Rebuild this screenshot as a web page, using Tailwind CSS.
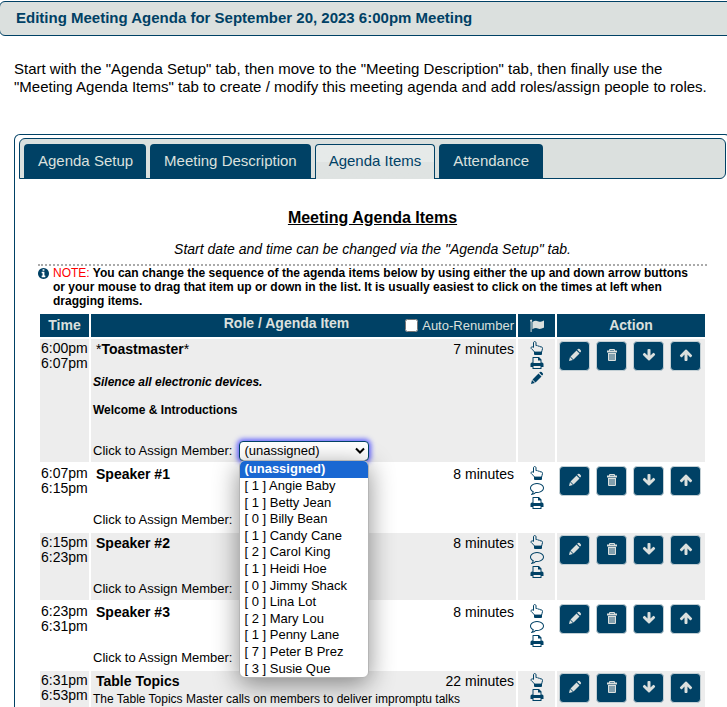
<!DOCTYPE html>
<html lang="en">
<head>
<meta charset="utf-8">
<title>Editing Meeting Agenda</title>
<script src="https://cdn.jsdelivr.net/npm/@tailwindcss/browser@4"></script>
</head>
<body class="bg-white text-black font-['Liberation_Sans',Arial,sans-serif]">
<svg class="hidden" aria-hidden="true">
  <symbol id="pencil" viewBox="0 0 14 14"><path fill="currentColor" d="M1 13l1-4 2.900 2.900zM2.500 8.400L8.500 2.400l3 3-6 6zM9.200 1.800l.7-.7a1.200 1.200 0 0 1 1.700 0l1.100 1.100a1.200 1.200 0 0 1 0 1.700l-.7.7z"/></symbol>
  <symbol id="trash" viewBox="0 0 14 14"><path fill="currentColor" fill-rule="evenodd" d="M5 1h4a1 1 0 0 1 1 1v.5h2v2H2v-2h2V2a1 1 0 0 1 1-1zM5 2v.5h4V2zM3 5h8v7a1 1 0 0 1-1 1H4a1 1 0 0 1-1-1zM4.600 6v6h.8V6zM6.600 6v6h.8V6zM8.600 6v6h.8V6z"/></symbol>
  <symbol id="print" viewBox="0 0 14 14"><path fill="currentColor" fill-rule="evenodd" d="M3 1h6l2.500 2.500V6.500H12A1.500 1.500 0 0 1 13.500 8v3H11.500v2H2.500v-2H.5V8A1.500 1.500 0 0 1 2 6.500h.5V1.500A.5.5 0 0 1 3 1zM3.500 2v5h7V4.500H8V2zM3.500 10v2h7v-2z"/></symbol>
  <symbol id="comment" viewBox="0 0 1792 1792"><path fill="currentColor" d="M896 384q-204 0-381.500 69.500t-282 187.500-104.500 255q0 112 71.500 213.500t201.500 175.500l87 50-27 96q-24 91-70 172 152-63 275-171l43-38 57 6q69 8 130 8 204 0 381.500-69.500t282-187.500 104.500-255-104.500-255-282-187.500-381.500-69.500zm896 512q0 174-120 321.500t-326 233-450 85.500q-70 0-145-8-198 175-460 242-49 14-114 22h-5q-15 0-27-10.500t-16-27.500v-1q-3-4-.5-12t2-10 4.500-9.500l6-9 7-8.500 8-9q7-8 31-34.500t34.500-38 31-39.500 32.500-51 27-59 26-76q-157-89-247.500-220t-90.500-281q0-174 120-321.500t326-233 450-85.500 450 85.500 326 233 120 321.500z"/></symbol>
  <symbol id="up" viewBox="0 0 1792 1792"><path fill="currentColor" d="M1675 971q0 51-37 90l-75 75q-38 38-91 38-54 0-90-38l-294-293v704q0 52-37.500 84.500t-90.500 32.500h-128q-53 0-90.500-32.500t-37.500-84.500v-704l-294 293q-36 38-90 38t-90-38l-75-75q-38-38-38-90 0-53 38-91l651-651q35-37 90-37 54 0 91 37l651 651q37 39 37 91z"/></symbol>
  <symbol id="down" viewBox="0 0 1792 1792"><path fill="currentColor" transform="rotate(180 896 896)" d="M1675 971q0 51-37 90l-75 75q-38 38-91 38-54 0-90-38l-294-293v704q0 52-37.500 84.500t-90.500 32.500h-128q-53 0-90.500-32.500t-37.500-84.500v-704l-294 293q-36 38-90 38t-90-38l-75-75q-38-38-38-90 0-53 38-91l651-651q35-37 90-37 54 0 91 37l651 651q37 39 37 91z"/></symbol>
  <symbol id="info" viewBox="128 128 1536 1536"><path fill="currentColor" d="M1152 1376v-160q0-14-9-23t-23-9h-96v-512q0-14-9-23t-23-9h-320q-14 0-23 9t-9 23v160q0 14 9 23t23 9h96v320h-96q-14 0-23 9t-9 23v160q0 14 9 23t23 9h448q14 0 23-9t9-23zm-128-896v-160q0-14-9-23t-23-9h-192q-14 0-23 9t-9 23v160q0 14 9 23t23 9h192q14 0 23-9t9-23zm640 416q0 209-103 385.500t-279.500 279.500-385.500 103-385.500-103-279.500-279.500-103-385.500 103-385.500 279.500-279.500 385.500-103 385.500 103 279.500 279.500 103 385.500z"/></symbol>
  <symbol id="flag" viewBox="0 0 14 14"><path fill="currentColor" d="M0 1.700a1.100 1.100 0 1 1 1.600 1V13H.6V2.700A1.100 1.100 0 0 1 0 1.700zM2.400 3C3.800 2.100 5 1.700 6 1.800c1.400.1 2.200 1 3.600 1 1.300 0 2.600-.6 3.600-1.100.5-.2.800 0 .8.400v6.100c0 .3-.1.500-.4.600-1.300.7-2.500 1.200-3.900 1.200-1.400 0-2.300-1-3.700-1-1.300 0-2.400.5-3.600 1.200z"/></symbol>
  <symbol id="hand" viewBox="0 0 14 14"><path fill="none" stroke="currentColor" stroke-width="1" stroke-linejoin="round" d="M4.500 11.300C4.200 10 3.200 9.300 1.900 8.300 1.100 7.600.8 6.900 1.300 6.200c.5-.6 1.400-.4 2.200.2V2c0-.9.500-1.500 1.200-1.500S6 1.100 6 2v2.700c.8-.4 1.600-.1 2 .5.8-.4 1.700 0 2 .6 1.600-.3 2.500.4 2.500 1.700 0 1.600-.9 2.400-1 3.800z"/><path fill="currentColor" d="M4 10.800h8V13a1 1 0 0 1-1 1H5a1 1 0 0 1-1-1z"/></symbol>
</svg>

<div class="min-h-screen flex flex-col overflow-x-hidden">
  <header class="mt-px -ml-px -mr-2 h-[35px] flex items-center border border-[#004165] rounded-md bg-[#dbe0de] pl-4">
    <h1 class="text-[15px] font-bold text-[#004165]">Editing Meeting Agenda for September 20, 2023 6:00pm Meeting</h1>
  </header>
  <p class="mt-6 pl-3.5 text-[15px] leading-[18px] whitespace-nowrap">Start with the "Agenda Setup" tab, then move to the "Meeting Description" tab, then finally use the<br>"Meeting Agenda Items" tab to create / modify this meeting agenda and add roles/assign people to roles.</p>

  <main class="mt-[38px] ml-3.5 -mr-1 flex-1 border border-b-0 border-[#004165] rounded-t-md pt-[3px]">
    <nav class="mx-1 h-[41px] flex items-end gap-1 border border-[#004165] rounded-t-md rounded-br-md bg-[#dbe0de] pl-1 text-[15px] text-[#dbe0de]">
      <a href="#setup" class="h-[34px] flex items-center rounded-t bg-[#004165] pl-3.5 pr-[13px]">Agenda Setup</a>
      <a href="#description" class="h-[34px] flex items-center rounded-t bg-[#004165] px-3.5">Meeting Description</a>
      <a href="#items" class="h-[35px] -mb-px flex items-center rounded-t border border-b-0 border-[#004165] bg-linear-to-b from-[#e6eae9] from-50% to-[#dfe3e2] to-50% px-[13px] pb-0.5 text-[#004165]">Agenda Items</a>
      <a href="#attendance" class="h-[34px] flex items-center rounded-t bg-[#004165] px-3.5">Attendance</a>
    </nav>

    <section id="items" class="px-[23px] pt-[29px]">
      <h2 class="text-center text-base leading-5 font-bold underline">Meeting Agenda Items</h2>
      <p class="mt-[11px] text-center text-sm leading-5 italic">Start date and time can be changed via the "Agenda Setup" tab.</p>
      <div class="mt-[5px] border-t-2 border-dotted border-[#aaaaaa]"></div>
      <p class="flex gap-1 text-xs leading-[14px] font-bold"><svg class="mt-0.5 size-[11px] shrink-0 text-[#004165]"><use href="#info"/></svg><span><span class="text-[#ff0000] font-normal">NOTE:</span> You can change the sequence of the agenda items below by using either the up and down arrow buttons<br>or your mouse to drag that item up or down in the list. It is usually easiest to click on the times at left when<br>dragging items.</span></p>

      <table class="mt-1 -mb-0.5 w-full table-fixed border-separate border-spacing-[2px]">
        <colgroup><col class="w-[49px]"><col><col class="w-[37px]"><col class="w-[148px]"></colgroup>
        <thead>
          <tr class="h-[23px] text-sm leading-[19px] text-[#dbe0de] *:bg-[#004165] *:p-0">
            <th>Time</th>
            <th>
              <div class="grid grid-cols-[1fr_auto_1fr] items-center pr-0.5">
                <span></span>
                <span class="-ml-8 pb-1">Role / Agenda Item</span>
                <label class="flex items-center justify-end gap-1 whitespace-nowrap text-[13px] font-normal"><input type="checkbox" class="size-[13px]">Auto-Renumber</label>
              </div>
            </th>
            <th><svg class="mx-auto size-3.5" role="img" aria-label="Flags"><use href="#flag"/></svg></th>
            <th>Action</th>
          </tr>
        </thead>
        <tbody id="rows" class="align-top text-sm"></tbody>
      </table>
    </section>
  </main>
</div>

<script>
const members = [[1,'Angie Baby'],[1,'Betty Jean'],[0,'Billy Bean'],[1,'Candy Cane'],[2,'Carol King'],[1,'Heidi Hoe'],[0,'Jimmy Shack'],[0,'Lina Lot'],[2,'Mary Lou'],[1,'Penny Lane'],[7,'Peter B Prez'],[3,'Susie Que']];
const items = [
  {s:'6:00pm', e:'6:07pm', name:'<span class="font-normal">*</span>Toastmaster<span class="font-normal">*</span>', min:7, flags:['hand','print','pencil'], open:true, assign:true,
   note:'<div class="mt-4 mb-6 pl-0.5 text-xs leading-[14px] font-bold"><em>Silence all electronic devices.</em><br><br>Welcome &amp; Introductions</div>'},
  {s:'6:07pm', e:'6:15pm', name:'Speaker #1', min:8, flags:['hand','comment','print'], assign:true, note:'<div class="h-[26px]"></div>'},
  {s:'6:15pm', e:'6:23pm', name:'Speaker #2', min:8, flags:['hand','comment','print'], assign:true, note:'<div class="h-[26px]"></div>'},
  {s:'6:23pm', e:'6:31pm', name:'Speaker #3', min:8, flags:['hand','comment','print'], assign:true, note:'<div class="h-[26px]"></div>'},
  {s:'6:31pm', e:'6:53pm', name:'Table Topics', min:22, flags:['hand','print'], note:'<div class="pl-0.5 text-xs leading-4">The Table Topics Master calls on members to deliver impromptu talks</div>'}
];
const popup = `<ul role="listbox" class="absolute top-[19px] left-0 z-10 flex h-[218px] w-[130px] flex-col overflow-hidden rounded-md border border-[#b5b5b5] bg-white text-[13px] leading-4 shadow-[0_6px_26px_rgba(0,0,0,0.45)]">
  <li role="option" aria-selected="true" class="flex flex-1 items-center bg-[#1967d2] pl-1 font-bold text-white">(unassigned)</li>
  ${members.map(([n,m]) => `<li role="option" class="flex flex-1 items-center pl-1 whitespace-nowrap">[ ${n} ] ${m}</li>`).join('')}</ul>`;
const select = (i, open) => `<div class="flex h-5 items-center gap-[7px] pl-0.5 mb-px text-[13px]"><label for="m${i}">Click to Assign Member:</label>
  <div class="relative"><select id="m${i}" class="block h-5 w-[130px] appearance-none rounded border border-[#004165] bg-white pl-1 text-[13px] leading-[18px] ${open ? 'shadow-[0_0_5px_2px_#6464ff]' : ''}"><option>(unassigned)</option></select>
  <svg class="pointer-events-none absolute top-1.5 right-1 h-2 w-2.5" viewBox="0 0 10 8"><path d="M1 1.500l4 4 4-4" fill="none" stroke="black" stroke-width="2"/></svg>${open ? popup : ''}</div></div>`;
const actions = [['pencil','Edit'],['trash','Delete'],['down','Move down'],['up','Move up']];
document.getElementById('rows').innerHTML = items.map((r, i) => `
<tr class="*:p-0 ${i % 2 ? '' : '*:bg-[#ededed]'}">
  <td><div class="pt-0.5 pl-px leading-[15px]">${r.s}<br>${r.e}</div></td>
  <td><div class="flex h-5 items-center justify-between pr-0.5 pl-[5px]"><b>${r.name}</b><span>${r.min} minutes</span></div>${r.note}${r.assign ? select(i, r.open) : ''}</td>
  <td><div class="flex flex-col items-center gap-px pt-0.5 text-[#004165]">${r.flags.map(f => `<svg class="size-3.5"><use href="#${f}"/></svg>`).join('')}</div></td>
  <td><div class="flex gap-1.5 pt-0.5 pl-0.5">${actions.map(([a, l]) => `<button aria-label="${l}" class="flex h-[30px] w-[31px] items-center justify-center rounded border border-[#c3cfd4] bg-[#004165] pb-0.5 text-[#dbe0de]"><svg class="size-3.5"><use href="#${a}"/></svg></button>`).join('')}</div></td>
</tr>`).join('');
</script>
</body>
</html>
